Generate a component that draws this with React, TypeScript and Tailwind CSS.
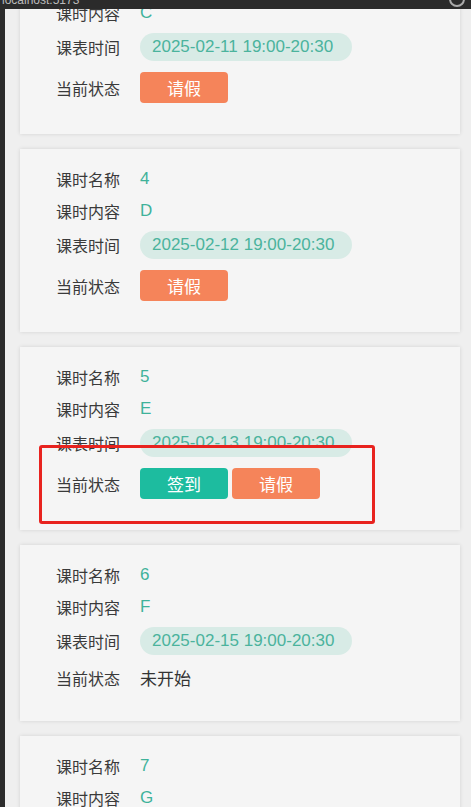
import React from "react";

type Lesson = {
  name: string;
  content: string;
  time: string;
  status: "leave" | "both" | "pending";
};

const lessons: Lesson[] = [
  { name: "3", content: "C", time: "2025-02-11 19:00-20:30", status: "leave" },
  { name: "4", content: "D", time: "2025-02-12 19:00-20:30", status: "leave" },
  { name: "5", content: "E", time: "2025-02-13 19:00-20:30", status: "both" },
  { name: "6", content: "F", time: "2025-02-15 19:00-20:30", status: "pending" },
  { name: "7", content: "G", time: "2025-02-16 19:00-20:30", status: "pending" },
];

const labelCls =
  "w-[84px] shrink-0 text-[16px] text-[#3a3a3a] [font-family:'Noto_Sans_CJK_SC','Microsoft_YaHei',sans-serif]";

function Card({ l, highlight }: { l: Lesson; highlight?: boolean }) {
  return (
    <div className="relative bg-[#f5f5f5] shadow-[0_0_4px_rgba(0,0,0,0.12)] pl-[36px] pt-[14px] pb-[25px]">
      <div className="flex items-center h-[32px]">
        <span className={labelCls}>课时名称</span>
        <span className="text-[17px] text-[#3fb29a] [font-family:'Liberation_Sans',Arial,sans-serif]">{l.name}</span>
      </div>
      <div className="flex items-center h-[31px]">
        <span className={labelCls}>课时内容</span>
        <span className="text-[17px] text-[#3fb29a] [font-family:'Liberation_Sans',Arial,sans-serif]">{l.content}</span>
      </div>
      <div className="flex items-center h-[38px]">
        <span className={labelCls}>课表时间</span>
        <span className="h-[28px] w-[212px] rounded-full bg-[#d8ebe6] pl-[12px] flex items-center text-[17px] text-[#4bb39d] [font-family:'Liberation_Sans',Arial,sans-serif]">
          {l.time}
        </span>
      </div>
      {l.status === "pending" ? (
        <div className="flex items-center h-[36px]">
          <span className={labelCls}>当前状态</span>
          <span className="text-[17px] text-[#333] [font-family:'Noto_Sans_CJK_SC',sans-serif]">未开始</span>
        </div>
      ) : (
        <div className="flex items-center h-[43px]">
          <span className={labelCls}>当前状态</span>
          <div className="flex gap-[4px]">
            {l.status === "both" && (
              <button className="h-[31px] w-[88px] rounded-[4px] bg-[#1dbc9f] text-white text-[17px] [font-family:'Noto_Sans_CJK_SC',sans-serif]">
                签到
              </button>
            )}
            <button className="h-[31px] w-[88px] rounded-[4px] bg-[#f5845a] text-white text-[17px] [font-family:'Noto_Sans_CJK_SC',sans-serif]">
              请假
            </button>
          </div>
        </div>
      )}
      {highlight && (
        <div className="absolute left-[19px] top-[98px] w-[336px] h-[79px] border-[3px] border-[#e8231f] rounded-[3px]" />
      )}
    </div>
  );
}

export default function App() {
  return (
    <div className="relative h-[807px] w-[471px] overflow-hidden bg-[#efefef] flex">
      <div className="w-[5px] shrink-0 bg-[#2b2b2b]" />
      <div className="flex-1 pl-[15px] pr-[11px]">
        <div className="mt-[-49px] flex flex-col gap-[15px]">
          {lessons.map((l, i) => (
            <Card key={i} l={l} highlight={i === 2} />
          ))}
        </div>
      </div>
      <div className="absolute left-0 top-0 w-full h-[9px] bg-[#2b2b2b] overflow-hidden">
        <span className="absolute left-[2px] top-[-9px] text-[12px] text-[#bbbbbb] [font-family:'Liberation_Sans',sans-serif]">
          localhost:5173
        </span>
        <span className="absolute right-[6px] top-[-9px] w-[16px] h-[16px] rounded-full border-[2px] border-[#aaaaaa]" />
      </div>
    </div>
  );
}
